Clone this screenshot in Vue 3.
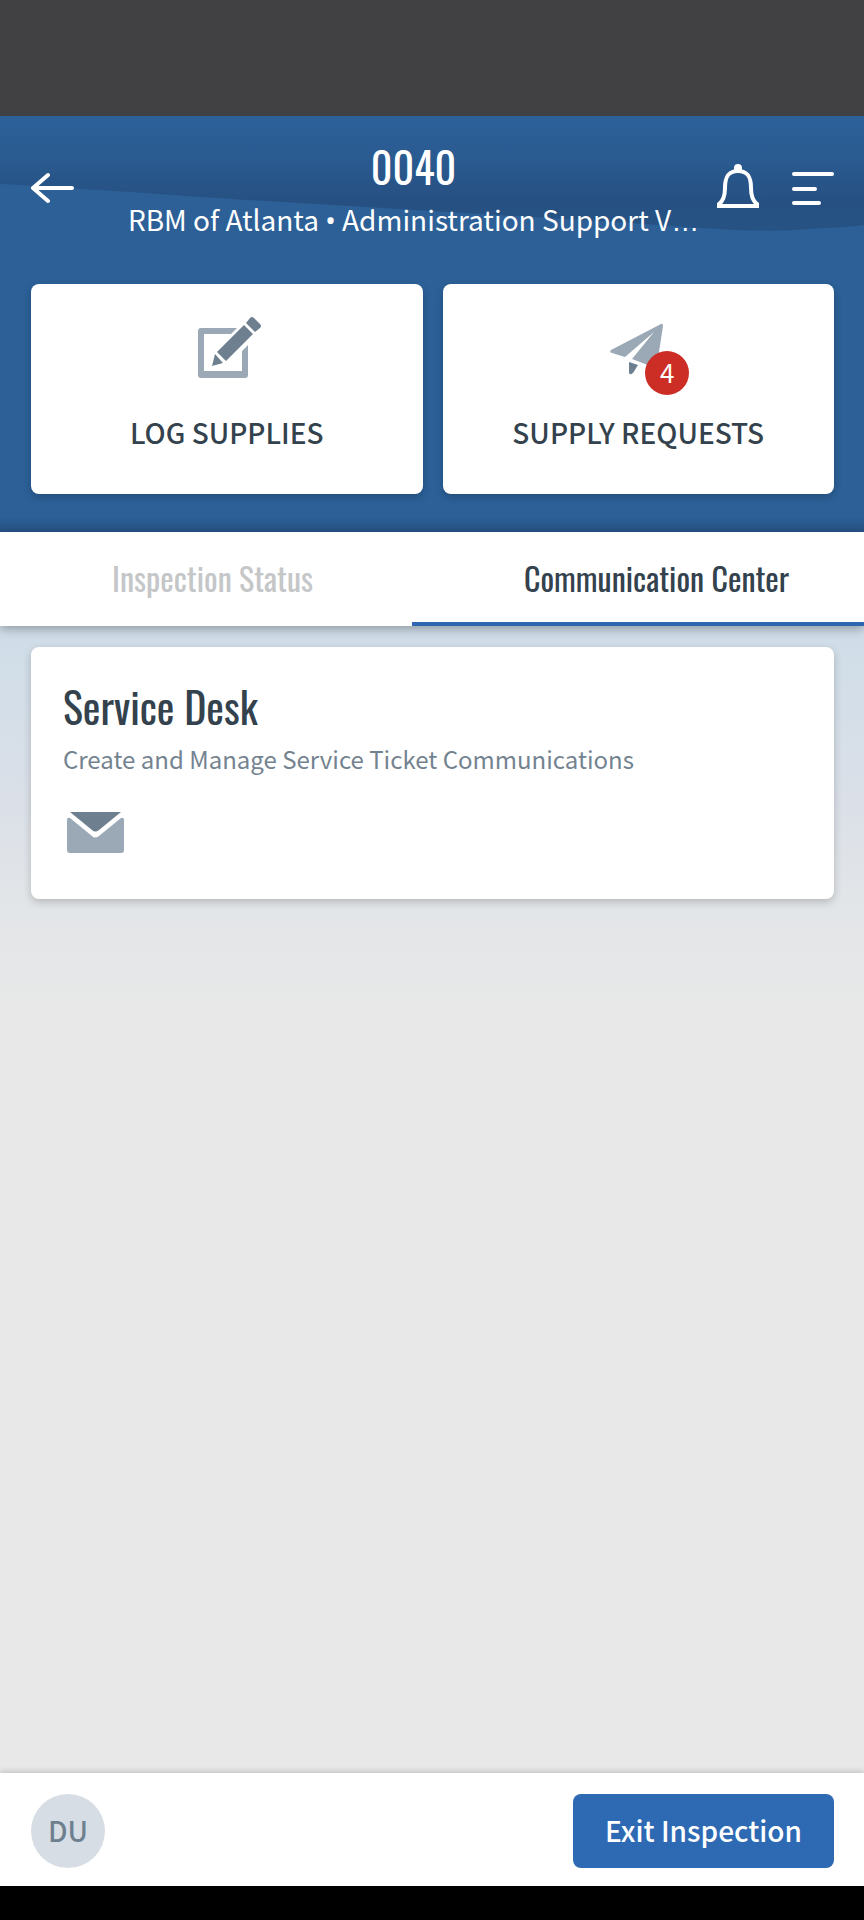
<script setup>
import { ref } from "vue";

const site = {
	code: "0040",
	company: "RBM of Atlanta",
	building: "Administration Support V",
};

const tabs = [
	{ id: "status", name: "Inspection Status" },
	{ id: "communication", name: "Communication Center" },
];

const activeTab = ref("communication");
const requestCount = ref(4);
</script>

<template>
	<div class="app">
		<div class="status-bar"></div>

		<header class="header">
			<svg class="wave" viewBox="0 0 864 120" preserveAspectRatio="none" aria-hidden="true">
				<defs>
					<linearGradient id="wave-fill" x1="0" y1="0" x2="0" y2="1">
						<stop offset="0" stop-color="#2c6199" />
						<stop offset="0.35" stop-color="#2a5b91" />
						<stop offset="0.75" stop-color="#265082" />
						<stop offset="1" stop-color="#265284" />
					</linearGradient>
				</defs>
				<path fill="url(#wave-fill)" d="M0 0H864V109C846 112 830 111 810 113C780 116 745 115 700 112C600 105 500 99 430 95C330 89 210 82 130 76C80 73 40 70 0 68Z" />
			</svg>

			<div class="head-row">
				<button class="icon-button" aria-label="Back">
					<svg width="44" height="32" viewBox="0 0 44 32" fill="none" stroke="#fff" stroke-width="4" stroke-linecap="round" stroke-linejoin="round">
						<path d="M41 16H2M17 3L2 16L17 29" />
					</svg>
				</button>
				<div class="titles">
					<h1 class="title">{{ site.code }}</h1>
					<p class="subtitle">{{ site.company }} <span class="bullet">•</span> {{ site.building }}<span class="dots">…</span></p>
				</div>
				<button class="icon-button bell" aria-label="Notifications">
					<svg width="44" height="48" viewBox="0 0 44 48">
						<circle cx="22" cy="4" r="4" fill="#fff" />
						<path d="M3 42V40C7 37 9 32 9 24C9 13 12 7 22 7C32 7 35 13 35 24C35 32 37 37 41 40V42Z" fill="none" stroke="#fff" stroke-width="4" />
					</svg>
				</button>
				<button class="icon-button" aria-label="Menu">
					<svg width="44" height="36" viewBox="0 0 44 36" fill="none" stroke="#fff" stroke-width="4" stroke-linecap="round">
						<path d="M4 4H42M4 19H25M4 33H29" />
					</svg>
				</button>
			</div>

			<div class="actions">
				<button class="action">
					<span class="action-icon">
						<svg width="68" height="64" viewBox="0 0 68 64" aria-hidden="true">
							<path fill="#9ba9b7" d="M44 12H8Q5 12 5 15V59Q5 62 8 62H52Q55 62 55 59V29L49 35V55H11V18H38Z" />
							<path fill="#6e808f" d="M53 7L57 2Q59 0 61 2L67 8Q69 10 67 12L62 16ZM51 9L60 18L33 45L24 36ZM22 38L30 47L19 50Z" />
						</svg>
					</span>
					<span class="action-name">LOG SUPPLIES</span>
				</button>
				<button class="action">
					<span class="action-icon">
						<svg width="68" height="64" viewBox="0 0 68 64" aria-hidden="true">
							<path fill="#9ba9b7" d="M7 34L57 8Q59 7 59 10L53 49Q53 52 49 51L28 43L50 16L21 41L8 37Q5 36 7 34Z" />
							<path fill="#6e808f" d="M25 46L34 49L29 57Q25 60 25 56Z" />
						</svg>
						<span class="badge">{{ requestCount }}</span>
					</span>
					<span class="action-name">SUPPLY REQUESTS</span>
				</button>
			</div>
		</header>

		<nav class="tabs" role="tablist">
			<button v-for="tab in tabs"
				:key="tab.id"
				:class="activeTab === tab.id ? 'tab active' : 'tab'"
				role="tab"
				:aria-selected="activeTab === tab.id"
				@click="activeTab = tab.id"
			>
				{{ tab.name }}
			</button>
		</nav>

		<main class="content">
			<section class="card">
				<h2 class="card-title">Service Desk</h2>
				<p class="card-text">Create and Manage Service Ticket Communications</p>
				<svg class="mail" width="64" height="48" viewBox="0 0 64 48" aria-hidden="true">
					<path fill="#9ba9b7" d="M4 11Q4 8 7 9L29 27Q32 30 36 27L58 9Q61 8 61 11V41Q61 44 58 44H7Q4 44 4 41Z" />
					<path fill="#6e808f" d="M7 3H58L36 21Q32 24 29 21Z" />
				</svg>
			</section>
		</main>

		<footer class="footer">
			<div class="avatar">DU</div>
			<button class="exit">Exit Inspection</button>
		</footer>
		<div class="nav-bar"></div>
	</div>
</template>

<style>
	body {
		margin: 0;
	}
</style>

<style scoped>
	.app {
		display: flex;
		flex-direction: column;
		min-height: 100vh;
		background-color: #e8e8e8;
		color: #33424d;
		font-family: "Noto Sans CJK SC", "Noto Sans", sans-serif;
	}

	h1, h2, p {
		margin: 0;
	}

	button {
		padding: 0;
		border: none;
		background: none;
		color: inherit;
		font-family: inherit;
		cursor: pointer;
	}

	svg {
		display: block;
		flex-shrink: 0;
	}

	.status-bar {
		height: 116px;
		background-color: #414042;
	}

	.header {
		position: relative;
		padding: 22px 30px 38px 31px;
		background: linear-gradient(to top, #265284, #2c6097 16px);
	}

	.wave {
		position: absolute;
		top: 0;
		left: 0;
		width: 100%;
		height: 120px;
	}

	.head-row {
		position: relative;
		display: flex;
		align-items: flex-start;
		margin-bottom: 40px;
		color: #fff;
	}

	.icon-button {
		display: flex;
		align-items: center;
		height: 100px;
	}

	.bell {
		margin-right: 30px;
	}

	.titles {
		flex: 1;
		min-width: 0;
		margin: 0 12px 0 48px;
		text-align: center;
	}

	.title,
	.tab,
	.card-title {
		font-family: "Oswald", "Liberation Sans Narrow", "DejaVu Sans Condensed", sans-serif;
		font-weight: 400;
	}

	.title {
		font-size: 42px;
		line-height: 56px;
	}

	.subtitle {
		overflow: hidden;
		font-size: 28px;
		line-height: 50px;
		text-overflow: ellipsis;
		white-space: nowrap;
	}

	/* the default face draws these two full width */
	.bullet,
	.dots {
		font-family: "Noto Sans", sans-serif;
		line-height: 1;
	}

	.dots {
		font-family: "Liberation Sans", sans-serif;
	}

	.actions {
		position: relative;
		display: grid;
		grid-template-columns: 1fr 1fr;
		gap: 20px;
	}

	.action {
		display: flex;
		flex-direction: column;
		align-items: center;
		gap: 32px;
		padding: 32px 16px 42px;
		border-radius: 8px;
		background-color: #fff;
		box-shadow: 0 3px 8px rgba(0, 0, 0, 0.2);
	}

	.action-icon {
		position: relative;
	}

	.action-name {
		font-size: 28px;
		font-weight: 500;
		line-height: 40px;
	}

	.badge {
		position: absolute;
		top: 35px;
		left: 41px;
		width: 44px;
		height: 44px;
		border-radius: 50%;
		background-color: #cc2d24;
		color: #fff;
		font-size: 26px;
		line-height: 42px;
		text-align: center;
	}

	.tabs {
		position: relative;
		display: grid;
		grid-template-columns: 412fr 452fr;
		background-color: #fff;
		box-shadow: 0 3px 10px rgba(0, 0, 0, 0.3);
	}

	.tab {
		height: 94px;
		padding-left: 112px;
		border-bottom: 4px solid transparent;
		color: #c4c6c8;
		font-size: 32px;
		text-align: left;
		white-space: nowrap;
	}

	.tab.active {
		border-bottom-color: #2f66b0;
		color: #33424d;
	}

	.content {
		flex: 1;
		padding: 21px 30px 21px 31px;
		background: linear-gradient(#cfdde8, #dbe0e8 180px, #e2e5e8 270px, #e8e8e8 390px);
	}

	.card {
		padding: 31px 32px 42px;
		border-radius: 8px;
		background-color: #fff;
		box-shadow: 0 3px 8px rgba(0, 0, 0, 0.2);
	}

	.card-title {
		font-size: 42px;
		line-height: 56px;
	}

	.card-text {
		color: #748390;
		font-size: 24px;
		line-height: 50px;
	}

	.mail {
		margin-top: 25px;
	}

	.footer {
		position: relative;
		display: flex;
		align-items: center;
		justify-content: space-between;
		padding: 21px 30px 18px 31px;
		background-color: #fff;
		box-shadow: 0 -1px 6px rgba(0, 0, 0, 0.2);
	}

	.avatar {
		width: 74px;
		height: 74px;
		border-radius: 50%;
		background-color: #d6dde5;
		color: #6e808f;
		font-size: 28px;
		font-weight: 500;
		line-height: 72px;
		text-align: center;
	}

	.exit {
		height: 74px;
		padding: 0 32px 2px;
		border-radius: 8px;
		background-color: #2e6ab3;
		color: #fff;
		font-size: 28px;
		font-weight: 500;
	}

	.nav-bar {
		height: 34px;
		background-color: #000;
	}
</style>
